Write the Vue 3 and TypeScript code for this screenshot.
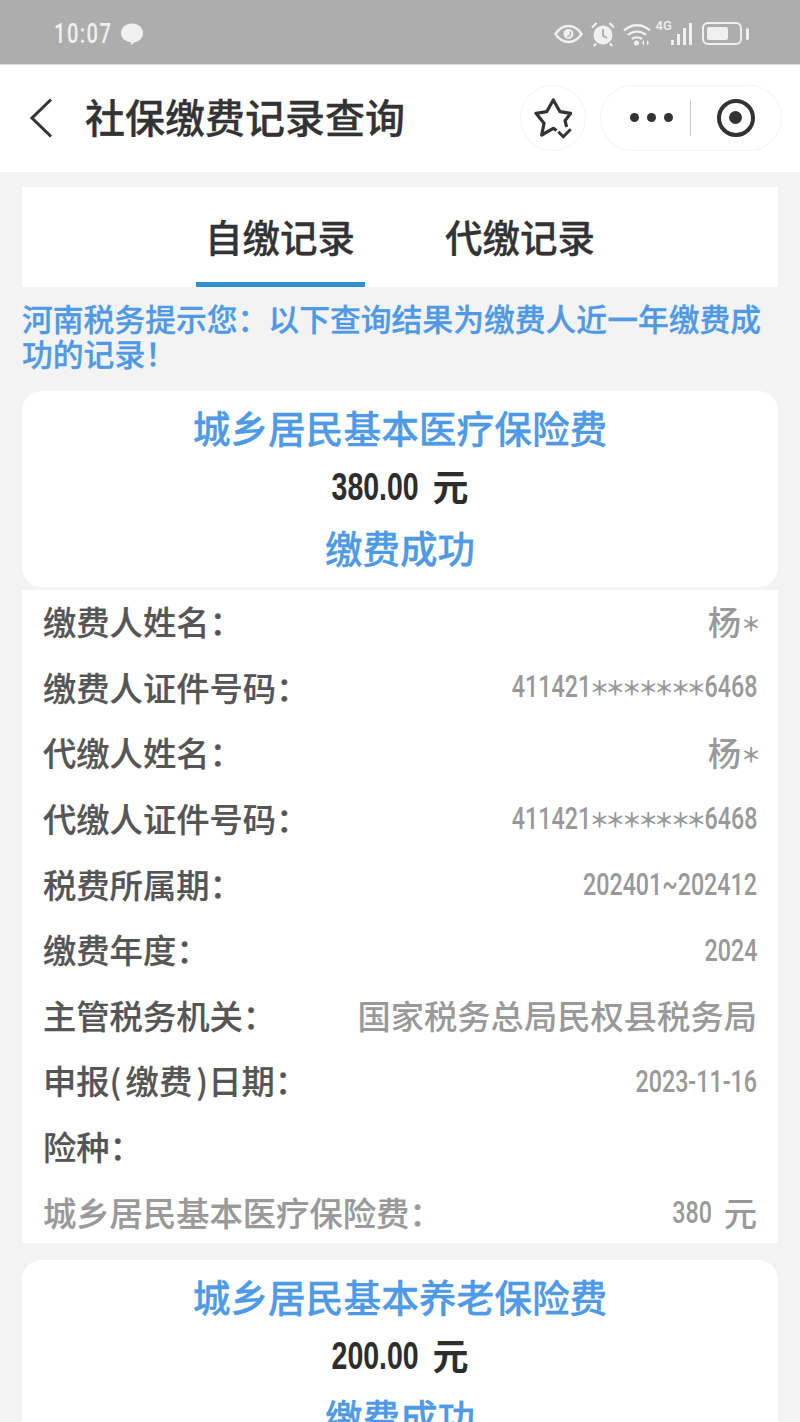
<script setup lang="ts">
interface Row {
  label: string
  value?: string
  kind?: 'num' | 'text'
  muted?: boolean
}

const rows: Row[] = [
  { label: '缴费人姓名：', value: '杨＊', kind: 'text' },
  { label: '缴费人证件号码：', value: '411421＊＊＊＊＊＊＊6468', kind: 'num' },
  { label: '代缴人姓名：', value: '杨＊', kind: 'text' },
  { label: '代缴人证件号码：', value: '411421＊＊＊＊＊＊＊6468', kind: 'num' },
  { label: '税费所属期：', value: '202401~202412', kind: 'num' },
  { label: '缴费年度：', value: '2024', kind: 'num' },
  { label: '主管税务机关：', value: '国家税务总局民权县税务局', kind: 'text' },
  { label: '申报(\u200A\u200A缴费\u200A\u200A)日期：', value: '2023-11-16', kind: 'num' },
  { label: '险种：' },
  { label: '城乡居民基本医疗保险费：', value: '380', kind: 'num', muted: true }
]

// each asterisk gets its own box, the rest stays one run of text
function parts(value: string): string[] {
  return value.split(/(＊)/).filter(Boolean)
}
</script>

<template>
  <div class="page">
    <div class="status-bar">
      <div class="status-left">
        <span class="time">10:07</span>
        <svg width="24" height="24" viewBox="0 0 24 24"><path d="M12 1.500c6 0 11 3.900 11 9.500 0 5-3.500 8.300-8 9.200l-4.500 3 .5-3C5 19.500 1 16 1 11 1 5.400 6 1.500 12 1.500z" fill="#f0f0f0"/></svg>
      </div>
      <div class="status-right">
        <svg width="29" height="20" viewBox="0 0 29 20" fill="none"><path d="M1.500 10C5 4.500 9.500 2 14.500 2s9.500 2.500 13 8c-3.500 5.500-8 8-13 8s-9.500-2.500-13-8z" stroke="#f0f0f0" stroke-width="2.400"/><circle cx="14.500" cy="10" r="5" fill="#f0f0f0"/><path d="M13 12.500c2.500 0 4-1.500 3.500-5" stroke="#adadad" stroke-width="1.400"/></svg>
        <svg width="26" height="26" viewBox="0 0 26 26" fill="none"><circle cx="13" cy="14" r="9.500" fill="#f0f0f0"/><path d="M13 8v6.500l4 2.500" stroke="#adadad" stroke-width="1.800"/><path d="M2 6.500 6.500 2M24 6.500 19.500 2M6 22.500l-2 2.500M20 22.500l2 2.500" stroke="#f0f0f0" stroke-width="2.200"/></svg>
        <svg width="29" height="24" viewBox="0 0 29 24" fill="none"><path d="M1 8.500c7.500-7 18.500-7 26 0M5 13c5-4.500 13-4.500 18 0M9 17c2.800-2.200 7.200-2.200 10 0" stroke="#f0f0f0" stroke-width="2.300"/><circle cx="13.500" cy="21" r="2.500" fill="#f0f0f0"/><path d="M21 18v5.500l-2-2.700zM24 18v5.500l2-2.700z" fill="#f0f0f0"/></svg>
        <div class="signal">
          <span class="net">4G</span>
          <i style="height: 5px"></i><i style="height: 11px"></i><i style="height: 17px"></i><i style="height: 22px"></i>
        </div>
        <div class="battery"><div class="battery-fill"></div></div>
        <div class="battery-nub"></div>
      </div>
    </div>

    <div class="nav">
      <svg class="back" width="24" height="40" viewBox="0 0 24 40" fill="none"><path d="M22 1.500 3 20l19 18.500" stroke="#333" stroke-width="3"/></svg>
      <div class="nav-title">社保缴费记录查询</div>
      <div class="star-btn">
        <svg width="38" height="42" viewBox="0 0 38 42" fill="none">
          <path d="M22.500 33.500 19.300 31.300 7.700 38 10 26.300 2 16.300 12.700 14.700 19.300 3 26 14.700 36.700 16.300 31 23.700 32.700 30" stroke="#333" stroke-width="3.200" stroke-linejoin="round"/>
          <path d="M24.300 34.700l5 5 7.400-7.400" stroke="#333" stroke-width="3"/>
        </svg>
      </div>
      <div class="capsule">
        <div class="dots"><i></i><i></i><i></i></div>
        <div class="divider"></div>
        <div class="target"><div class="target-dot"></div></div>
      </div>
    </div>

    <div class="content">
      <div class="tabs">
        <div class="tab active">自缴记录</div>
        <div class="tab">代缴记录</div>
      </div>
      <p class="notice">河南税务提示您：以下查询结果为缴费人近一年缴费成功的记录！</p>

      <div class="card">
        <div class="card-title">城乡居民基本医疗保险费</div>
        <div class="card-amount"><span class="amount-num">380.00</span><span class="amount-unit">元</span></div>
        <div class="card-status">缴费成功</div>
      </div>

      <div class="detail">
        <div v-for="row in rows" :key="row.label" class="row">
          <span class="row-label" :class="{ muted: row.muted }">{{ row.label }}</span>
          <span v-if="row.value" class="row-value">
            <span :class="{ num: row.kind === 'num' }">
              <template v-for="(part, i) in parts(row.value)" :key="i">
                <span v-if="part === '＊'" class="star">{{ part }}</span>
                <template v-else>{{ part }}</template>
              </template>
            </span>
            <span v-if="row.muted" class="unit">元</span>
          </span>
        </div>
      </div>

      <div class="card second">
        <div class="card-title">城乡居民基本养老保险费</div>
        <div class="card-amount"><span class="amount-num">200.00</span><span class="amount-unit">元</span></div>
        <div class="card-status">缴费成功</div>
      </div>
    </div>
  </div>
</template>

<style>
html,
body {
  margin: 0;
  background: #f3f3f3;
}
</style>

<style scoped>
.page {
  height: 1422px;
  overflow: hidden;
  background: #f3f3f3;
  font-family: "Noto Sans CJK SC", "Noto Sans", sans-serif;
  color: #333;
}

.status-bar {
  height: 65px;
  box-sizing: border-box;
  background: #adadad;
  border-bottom: 1px solid #ddd;
  display: flex;
  align-items: center;
  justify-content: space-between;
  padding: 3px 54px 0;
}

.status-left {
  display: flex;
  align-items: center;
  gap: 8px;
}

.time {
  display: block;
  width: 58px;
  font-family: Roboto, sans-serif;
  font-size: 28px;
  font-weight: 500;
  letter-spacing: 2px;
  color: #f0f0f0;
  white-space: nowrap;
  transform: scaleX(0.72);
  transform-origin: left center;
}

.status-right {
  display: flex;
  align-items: center;
  gap: 7px;
  margin-right: -3px;
}

.signal {
  display: flex;
  align-items: flex-end;
  gap: 2.500px;
  height: 23px;
  position: relative;
  margin-left: 12px;
  margin-right: 3px;
}

.signal i {
  display: block;
  width: 3.500px;
  background: #f0f0f0;
}

.net {
  position: absolute;
  left: -15px;
  top: -4px;
  font-family: Roboto, sans-serif;
  font-size: 13px;
  font-weight: 500;
  color: #f0f0f0;
}

.battery {
  width: 40px;
  height: 23px;
  box-sizing: border-box;
  border: 2px solid #f0f0f0;
  border-radius: 6px;
  padding: 3px;
}

.battery-fill {
  width: 21px;
  height: 100%;
  background: #f0f0f0;
  border-radius: 2px;
}

.battery-nub {
  width: 3px;
  height: 12px;
  background: #f0f0f0;
  border-radius: 2px;
  margin-left: -3px;
}

.nav {
  height: 107px;
  box-sizing: border-box;
  background: #fff;
  display: flex;
  align-items: center;
  padding: 0 18px 2px 29px;
}

.back {
  flex: none;
}

.nav-title {
  flex: 1;
  margin-left: 32px;
  padding-bottom: 3px;
  font-size: 40px;
  font-weight: 500;
  -webkit-text-stroke: 0.3px #333;
  color: #333;
}

.star-btn {
  width: 66px;
  height: 66px;
  box-sizing: border-box;
  border: 1px solid #f3f3f3;
  border-radius: 50%;
  display: flex;
  align-items: center;
  justify-content: center;
  margin-right: 14px;
}

.capsule {
  width: 182px;
  height: 66px;
  box-sizing: border-box;
  border: 1px solid #f3f3f3;
  border-radius: 33px;
  display: flex;
  align-items: center;
  padding-left: 28.500px;
}

.dots {
  display: flex;
  gap: 8px;
}

.dots i {
  display: block;
  width: 9px;
  height: 9px;
  border-radius: 50%;
  background: #333;
}

.divider {
  width: 1px;
  height: 36px;
  background: #ccc;
  margin-left: 17.500px;
}

.target {
  width: 38px;
  height: 38px;
  box-sizing: border-box;
  border: 4px solid #333;
  border-radius: 50%;
  display: flex;
  align-items: center;
  justify-content: center;
  margin-left: 25.500px;
}

.target-dot {
  width: 13px;
  height: 13px;
  border-radius: 50%;
  background: #333;
}

.content {
  padding: 15px 22px 0;
}

.tabs {
  height: 100px;
  background: #fff;
  display: flex;
  justify-content: center;
  gap: 71px;
}

.tab {
  width: 169px;
  box-sizing: border-box;
  text-align: center;
  font-size: 37.500px;
  font-weight: 500;
  line-height: 98px;
  -webkit-text-stroke: 0.3px #333;
  color: #333;
}

.tab.active {
  border-bottom: 5px solid #2f8fd3;
}

.notice {
  margin: 13px 0 0;
  font-size: 30.800px;
  font-weight: 500;
  line-height: 35px;
  -webkit-text-stroke: 0.3px #4f9ae6;
  color: #4f9ae6;
}

.card {
  margin-top: 21px;
  height: 196px;
  background: #fff;
  border-radius: 20px;
  text-align: center;
  padding-top: 6px;
  box-sizing: border-box;
}

.second {
  margin-top: 17px;
}

.card-title,
.card-status {
  height: 60px;
  line-height: 60px;
  font-size: 37.700px;
  font-weight: 500;
  -webkit-text-stroke: 0.3px #4f9ae6;
  color: #4f9ae6;
}

.card-status {
  font-size: 37.500px;
}

.card-amount {
  height: 60px;
  display: flex;
  align-items: center;
  justify-content: center;
  gap: 14px;
  font-size: 36px;
  font-weight: 700;
  color: #2d2d2d;
}

.amount-num {
  display: block;
  margin: 0 -14.500px;
  font-family: "Liberation Sans", sans-serif;
  font-size: 38px;
  transform: scaleX(0.75);
}

.amount-unit {
  padding-bottom: 4px;
}

.detail {
  margin-top: 3px;
  height: 653px;
  overflow: hidden;
  background: #fff;
  padding: 0 21px;
}

.row {
  height: 65.600px;
  box-sizing: border-box;
  padding-bottom: 4px;
  display: flex;
  align-items: center;
  justify-content: space-between;
  font-size: 33.300px;
  font-weight: 500;
}

.row-label {
  color: #555;
  -webkit-text-stroke: 0.2px #555;
}

.row-label.muted {
  color: #999;
  -webkit-text-stroke: 0.2px #999;
}

.row-value {
  color: #999;
  display: flex;
  align-items: center;
  gap: 12px;
}

.star {
  display: inline-block;
  width: 16px;
  font-size: 20px;
  font-weight: 700;
  text-align: center;
  vertical-align: 3px;
}

.num {
  display: block;
  margin-top: 4px;
  font-family: Roboto, "Noto Sans CJK SC", sans-serif;
  font-size: 31px;
  font-weight: 500;
  line-height: 36px;
  white-space: nowrap;
  transform: scaleX(0.75);
  transform-origin: right center;
}

.num .star {
  width: 21.600px;
  font-size: 20px;
  vertical-align: 1px;
  transform: scaleX(1.333);
}

.unit {
  font-size: 33.300px;
}
</style>
